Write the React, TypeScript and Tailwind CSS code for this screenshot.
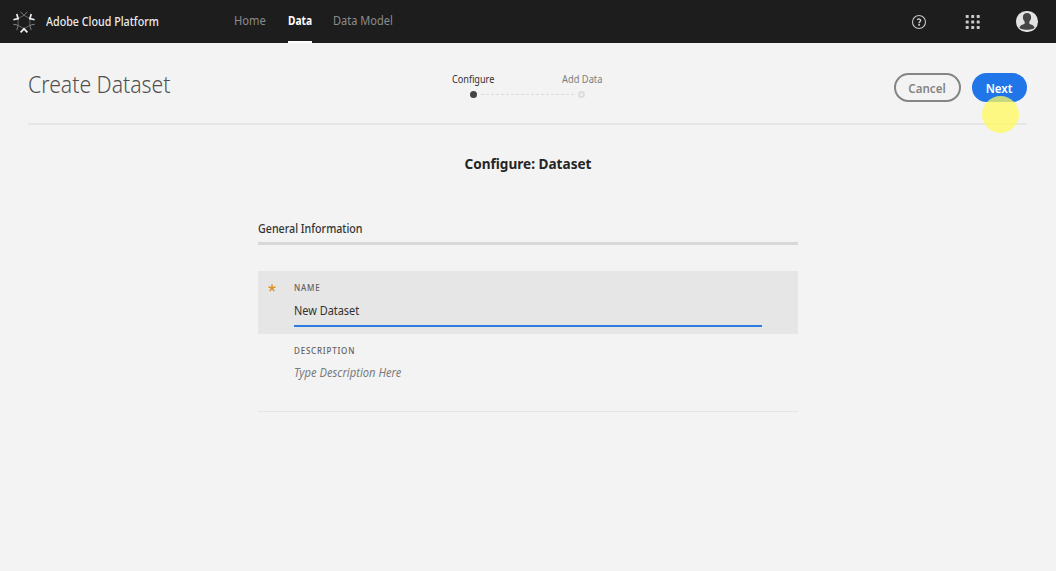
import React from "react";

const OUTER_ANGLES = [0, 60, 120, 180, 240, 300];

function PlatformLogo() {
  return (
    <svg width="24" height="24" viewBox="-12 -12 24 24" fill="none">
      <path d="M0 -6.7 5.9 -3.4V3.4L0 6.7 -5.9 3.4V-3.4Z" stroke="#777" strokeWidth=".8" />
      {OUTER_ANGLES.map((angle) => {
        const bright = angle % 120 === 60;
        return (
          <path
            key={angle}
            d={bright ? "M-3.4 -10.3 0 -6.8 3.4 -10.3" : "M-3.4 -10.3 0 -6.6 3.4 -10.3"}
            transform={`rotate(${angle})`}
            stroke={bright ? "#f0f0f0" : "#858585"}
            strokeWidth={bright ? 1.7 : 0.9}
          />
        );
      })}
    </svg>
  );
}

function HelpIcon() {
  return (
    <svg width="16" height="16" viewBox="0 0 16 16" fill="none" stroke="#c8c8c8">
      <circle cx="8" cy="8" r="6.5" strokeWidth="1.1" />
      <path d="M6.2 5.6C7.6 4.6 9.7 5 9.6 6.5 9.5 7.7 8.1 7.8 8.1 9.2" strokeWidth="1.5" />
      <path d="M8.1 10.1v1.6" strokeWidth="1.7" />
    </svg>
  );
}

function AppsIcon() {
  return (
    <svg width="15" height="14" viewBox="-.7 0 15 14" fill="#c9c9c9">
      {[0, 5.5, 11].map((y) => [0, 5.5, 11].map((x) => <rect key={`${x}-${y}`} x={x} y={y} width="3" height="3" rx=".4" />))}
    </svg>
  );
}

function Avatar() {
  return (
    <svg width="22" height="22" viewBox="0 0 22 22">
      <rect width="22" height="21" rx="10.3" fill="#e2e2e2" />
      <path
        d="M11 2c2.7 0 4.2 1.7 4.1 4.2 0 2-.8 3.4-1.8 4.5v1.8c.2 1 5 1.2 5.2 4.1 0 1.2-2.8 2.2-7.5 2.2s-7.5-1-7.5-2.2c.2-2.900 5-3.100 5.200-4.100v-1.800C7.700 9.600 6.900 8.200 6.900 6.200 6.800 3.700 8.300 2 11 2Z"
        fill="#454545"
      />
    </svg>
  );
}

function Header() {
  return (
    <header className="flex h-[43px] bg-[#1d1d1d] pr-[18px] pl-3">
      <div className="flex w-[222px] items-center">
        <PlatformLogo />
        <span className="ml-[10px] origin-left scale-x-[.893] text-[12px] font-medium whitespace-nowrap text-[#ececec]">Adobe Cloud Platform</span>
      </div>
      <nav className="flex text-[12px] leading-[41px] whitespace-nowrap text-[#8c8c8c]">
        <a className="w-[54px]"><span className="block origin-left scale-x-[.93]">Home</span></a>
        <a className="h-[43px] w-6 border-b-2 border-white font-bold text-white"><span className="block origin-left scale-x-[.85]">Data</span></a>
        <a className="ml-[21px]"><span className="block origin-left scale-x-[.92]">Data Model</span></a>
      </nav>
      <div className="ml-auto flex items-center">
        <HelpIcon />
        <span className="ml-[38px]"><AppsIcon /></span>
        <span className="ml-9"><Avatar /></span>
      </div>
    </header>
  );
}

function Steps() {
  return (
    <div className="flex w-[150px] flex-col text-[10px] leading-[14px]">
      <div className="flex justify-between">
        <span className="origin-left scale-x-[.91] text-[#323232]">Configure</span>
        <span className="origin-right scale-x-[.93] text-[#7d7d7d]">Add Data</span>
      </div>
      <div className="mt-[5px] flex items-center pr-[17px] pl-[18px]">
        <i className="size-[7px] rounded-full bg-[#444]" />
        <svg className="mx-1 h-px flex-1"><path d="M0 .5H100" stroke="#dadada" strokeDasharray="3 2" /></svg>
        <i className="size-[7px] rounded-full border-2 border-[#dcdcdc]" />
      </div>
    </div>
  );
}

export default function App() {
  return (
    <div className="h-[571px] overflow-hidden bg-[#f3f3f3] font-['Noto_Sans','Open_Sans',sans-serif]">
      <Header />
      <div className="relative mx-7 flex h-[82px] w-[999px] border-b-2 border-[#e6e6e6]">
        <h1 className="w-[424px] origin-left scale-x-[.883] pt-[24px] text-[24px] leading-[34px] font-light text-[#505050]">Create Dataset</h1>
        <div className="pt-[29px]"><Steps /></div>
        <div className="ml-auto flex gap-[11px] pt-[30px] text-[13px] font-semibold">
          <button className="h-[29px] w-[67px] rounded-full border-2 border-[#858585] pt-0.5 text-[#858585]"><span className="inline-block scale-x-[.89]">Cancel</span></button>
          <button className="h-[29px] w-[55px] rounded-full bg-[#2076e8] pt-0.5 text-white"><span className="inline-block scale-x-[.89]">Next</span></button>
        </div>
        <i className="absolute top-[53px] left-[954px] size-[37px] rounded-full bg-[#fff95c]/75" />
      </div>
      <main className="ml-[258px] w-[540px]">
        <h2 className="scale-x-[.906] pt-[27px] text-center text-[15px] leading-[22px] font-bold text-[#252525]">Configure: Dataset</h2>
        <h3 className="mt-[47px] h-[24px] border-b-3 border-[#d8d8d8] text-[12px] leading-4 font-medium text-[#323232]"><span className="block origin-left scale-x-[.89]">General Information</span></h3>
        <section className="mt-[26px] flex h-[63px] bg-[#e6e6e6]">
          <span className="w-9 pl-[10px]">
            <svg className="mt-[13px]" width="8" height="8" viewBox="-4 -4 8 8" stroke="#df9020" strokeWidth="1.4">
              {[0, 72, 144, 216, 288].map((a) => <path key={a} d="M0 0V-3.8" transform={`rotate(${a})`} />)}
            </svg>
          </span>
          <label className="w-[468px]">
            <span className="block pt-[11px] text-[8px] leading-3 font-medium tracking-[0.8px] text-[#606060]">NAME</span>
            <span className="mt-2 block h-[25px] border-b-2 border-[#2b7be3] text-[12px] leading-[18px] text-[#323232]"><span className="block origin-left scale-x-[.91]">New Dataset</span></span>
          </label>
        </section>
        <section className="h-[78px] border-b border-[#e4e4e4] pl-9">
          <span className="block pt-[11px] text-[8px] leading-3 font-medium tracking-[0.8px] text-[#606060]">DESCRIPTION</span>
          <span className="mt-[7px] block origin-left scale-x-[.93] text-[12px] leading-[18px] text-[#7b7b7b] italic">Type Description Here</span>
        </section>
      </main>
    </div>
  );
}
